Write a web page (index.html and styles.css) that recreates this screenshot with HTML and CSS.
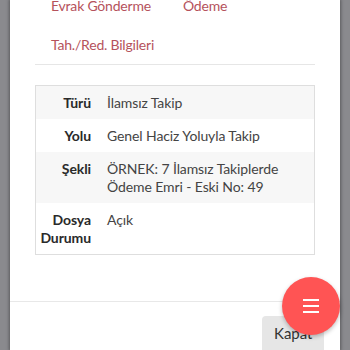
FILE: index.html
```html
<!DOCTYPE html>
<html lang="tr">
<head>
<meta charset="utf-8">
<link rel="stylesheet" href="styles.css">
</head>
<body>
<div class="backdrop">
  <div class="modal">
    <div class="modal-body">
      <nav class="tabs">
        <a class="tab">Evrak Gönderme</a>
        <a class="tab">Ödeme</a>
        <a class="tab">Tah./Red. Bilgileri</a>
      </nav>
      <div class="info">
        <div class="row striped"><div class="label">Türü</div><div class="value">İlamsız Takip</div></div>
        <div class="row"><div class="label">Yolu</div><div class="value">Genel Haciz Yoluyla Takip</div></div>
        <div class="row striped"><div class="label">Şekli</div><div class="value">ÖRNEK: 7 İlamsız Takiplerde Ödeme Emri - Eski No: 49</div></div>
        <div class="row"><div class="label">Dosya Durumu</div><div class="value">Açık</div></div>
      </div>
    </div>
    <div class="modal-footer">
      <button class="btn">Kapat</button>
    </div>
  </div>
  <button class="fab" aria-label="Menü">
    <svg width="16" height="14" viewBox="0 0 16 14"><path d="M0 1h16M0 7h16M0 13h16" stroke="#fff" stroke-width="2"/></svg>
  </button>
</div>
</body>
</html>
```
FILE: styles.css
```css
html, body { margin: 0; padding: 0; }
body {
  background: #8a8a8e;
  font-family: Lato, "Noto Sans", sans-serif;
  font-size: 14px;
  letter-spacing: -0.1px;
  overflow: hidden;
}
.backdrop { position: relative; width: 350px; height: 350px; overflow: hidden; }
.modal {
  margin: 0 10px;
  background: #fff;
  height: 350px;
  box-shadow: 0 0 3px 1px rgba(0,0,0,0.35);
  display: flex;
  flex-direction: column;
}
.modal-body {
  flex-shrink: 0;
  padding: 0 25px;
  margin-top: -14px;
  height: 316px;
  box-sizing: border-box;
  border-bottom: 1px solid #e8e8e8;
}
.tabs {
  display: flex;
  flex-wrap: wrap;
  border-bottom: 1px solid #e6e6e6;
}
.tab {
  color: #b5525c;
  padding: 0 16px;
  line-height: 39px;
  height: 39px;
  font-size: 14px;
  letter-spacing: -0.2px;
}
.info {
  margin-top: 20px;
  border: 1px solid #dedede;
}
.row { display: grid; grid-template-columns: 63px 1fr; }
.row.striped { background: #f7f7f7; }
.label {
  font-weight: 700;
  color: #2a2a2a;
  text-align: right;
  padding: 8px 8px 7px 0;
  line-height: 18px;
}
.value {
  color: #444;
  padding: 8px 8px 7px;
  line-height: 18px;
}
.modal-footer {
  flex-shrink: 0;
  display: flex;
  justify-content: flex-end;
  padding: 14px 16px 0;
}
.btn {
  background: #e6e6e6;
  border: none;
  border-radius: 4px;
  font-family: inherit;
  font-size: 15px;
  line-height: 18px;
  color: #333;
  padding: 8px 12px 14px;
  width: 62px;
  text-align: left;
}
.fab {
  position: absolute;
  left: 282px;
  top: 277px;
  width: 58px;
  height: 58px;
  border-radius: 50%;
  border: none;
  background: #ff5454;
  box-shadow: 0 2px 4px rgba(0,0,0,0.25);
  display: flex;
  align-items: center;
  justify-content: center;
  padding: 0;
}
```
